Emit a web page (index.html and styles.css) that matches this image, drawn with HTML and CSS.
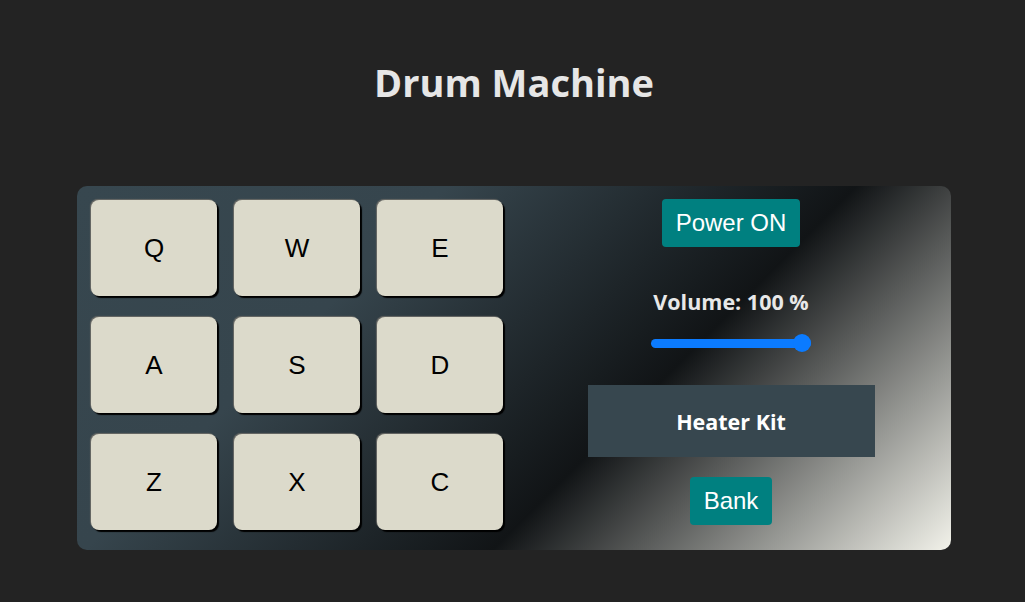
FILE: index.html
```html
<!DOCTYPE html>
<html lang="en">
<head>
<meta charset="utf-8">
<title>Drum Machine</title>
<link rel="stylesheet" href="styles.css">
</head>
<body>
  <h1 class="title">Drum Machine</h1>
  <div class="machine">
    <div class="pad">
      <button class="key">Q</button>
      <button class="key">W</button>
      <button class="key">E</button>
      <button class="key">A</button>
      <button class="key">S</button>
      <button class="key">D</button>
      <button class="key">Z</button>
      <button class="key">X</button>
      <button class="key">C</button>
    </div>
    <div class="controls">
      <button class="teal-btn">Power ON</button>
      <div class="volume-label">Volume: 100 %</div>
      <input class="volume" type="range" min="0" max="100" value="100">
      <div class="display">Heater Kit</div>
      <button class="teal-btn bank">Bank</button>
    </div>
  </div>
</body>
</html>
```
FILE: styles.css
```css
html, body {
  margin: 0;
  padding: 0;
}
body {
  background: #232323;
  font-family: "Open Sans", "Noto Sans", sans-serif;
  padding-left: 3px;
}
.title {
  margin: 0;
  padding-top: 56px;
  height: 130px;
  box-sizing: border-box;
  text-align: center;
  color: #e6e6e6;
  font-size: 38px;
  font-weight: 700;
  line-height: 52px;
}
.machine {
  width: 874px;
  height: 364px;
  box-sizing: border-box;
  margin: 56px auto 0;
  padding: 14px;
  border-radius: 10px;
  display: flex;
  background: linear-gradient(135deg, #37474f 0%, #36454d 30%, #111416 63%, #f2f2ea 100%);
}
.pad {
  display: grid;
  grid-template-columns: repeat(3, 126px);
  grid-template-rows: repeat(3, 96px);
  column-gap: 17px;
  row-gap: 21px;
}
.key {
  margin: 0;
  padding: 0;
  border: none;
  border-radius: 8px;
  background: #dcdacb;
  color: #000;
  font-family: "Liberation Sans", Arial, sans-serif;
  font-size: 26px;
  box-shadow: 2px 2px 1px #000, -1px -1px 1px #6a6a66;
  cursor: pointer;
}
.controls {
  flex: 1;
  display: flex;
  flex-direction: column;
  align-items: center;
  margin-top: -1px;
  padding-left: 22px;
}
.teal-btn {
  margin: 0;
  border: none;
  border-radius: 4px;
  background: #008080;
  color: #fff;
  font-family: "Liberation Sans", Arial, sans-serif;
  font-size: 24px;
  line-height: 28px;
  padding: 10px 14px;
  cursor: pointer;
}
.volume-label {
  margin-top: 43px;
  color: #e8e8e8;
  font-weight: 700;
  font-size: 21.5px;
  line-height: 24px;
}
.volume {
  -webkit-appearance: none;
  appearance: none;
  margin: 20px 0 0;
  width: 160px;
  height: 18px;
  background: transparent;
}
.volume::-webkit-slider-runnable-track {
  height: 9px;
  border-radius: 5px;
  background: #0b7bff;
}
.volume::-webkit-slider-thumb {
  -webkit-appearance: none;
  width: 18px;
  height: 18px;
  margin-top: -4.5px;
  border-radius: 50%;
  background: #0b7bff;
  border: none;
}
.display {
  margin-top: 33px;
  width: 287px;
  height: 72px;
  display: flex;
  align-items: center;
  justify-content: center;
  background: #37474f;
  color: #fff;
  font-weight: 700;
  font-size: 21.5px;
}
.bank {
  margin-top: 20px;
}
```
